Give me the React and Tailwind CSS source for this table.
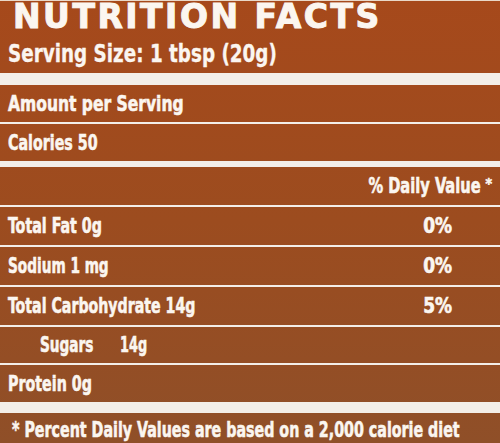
function Squeeze({ children, className = "" }) {
  return <span className={`inline-block whitespace-nowrap ${className}`}>{children}</span>;
}

export default function App() {
  const rows = [
    { label: "Total Fat 0g", dv: "0%", cls: "origin-left scale-x-[0.72]" },
    { label: "Sodium 1 mg", dv: "0%", cls: "origin-left scale-x-[0.69]" },
    { label: "Total Carbohydrate 14g", dv: "5%", cls: "origin-left scale-x-[0.716]" },
  ];

  return (
    <div className="w-[500px] h-[443px] overflow-hidden bg-linear-to-b from-[#a6491b] via-[#9c4c1f] to-[#8f4f28] text-[#fbf6f0] font-bold font-['DejaVu_Sans_Condensed','DejaVu_Sans',sans-serif] text-[22px] leading-none [-webkit-text-stroke:0.6px_#fbf6f0]">
      {/* Header */}
      <div className="h-[35px] border-t border-[#e9d8c8] pl-[13px]">
        <h1 className="font-['DejaVu_Sans',sans-serif] text-[33px] leading-[31px] font-bold tracking-[2.5px] [-webkit-text-stroke:1px_#fbf6f0]">
          NUTRITION FACTS
        </h1>
      </div>
      <div className="h-[38px] flex items-center pl-[8px] text-[24px] [-webkit-text-stroke:0.3px_#fbf6f0]">
        <Squeeze className="origin-left scale-x-[0.85]">Serving Size: 1 tbsp (20g)</Squeeze>
      </div>
      <div className="h-[12px] bg-[#f3eee8]" />

      <div className="h-[39px] flex items-center pl-[8px] border-b-2 border-[#f3eee8]">
        <Squeeze className="origin-left scale-x-[0.785]">Amount per Serving</Squeeze>
      </div>
      <div className="h-[37px] flex items-center pl-[8px]">
        <Squeeze className="origin-left scale-x-[0.72]">Calories 50</Squeeze>
      </div>
      <div className="h-[6px] bg-[#f3eee8]" />

      <div className="h-[40px] flex items-center justify-end pr-[8px] border-b-2 border-[#f3eee8]">
        <Squeeze className="origin-right scale-x-[0.74]">% Daily Value</Squeeze>
        <span className="ml-[5px] text-[14px] self-start mt-[9px]">*</span>
      </div>

      {rows.map((r) => (
        <div
          key={r.label}
          className="h-[38px] box-content flex items-center justify-between pl-[8px] pr-[48px] border-b-2 border-[#f3eee8]"
        >
          <Squeeze className={r.cls}>{r.label}</Squeeze>
          <Squeeze className="origin-right scale-x-[0.9] text-[21px]">{r.dv}</Squeeze>
        </div>
      ))}

      <div className="h-[36px] box-content flex items-center pl-[40px] border-b-2 border-[#f3eee8]">
        <Squeeze className="origin-left scale-x-[0.69] w-[80px]">Sugars</Squeeze>
        <Squeeze className="origin-left scale-x-[0.65]">14g</Squeeze>
      </div>
      <div className="h-[37px] flex items-center pl-[8px]">
        <Squeeze className="origin-left scale-x-[0.72]">Protein 0g</Squeeze>
      </div>
      <div className="h-[11px] bg-[#f3eee8]" />

      <div className="h-[33px] flex items-center pl-[12px] overflow-hidden">
        <Squeeze className="origin-left scale-x-[0.72]">
          * Percent Daily Values are based on a 2,000 calorie diet
        </Squeeze>
      </div>
    </div>
  );
}
